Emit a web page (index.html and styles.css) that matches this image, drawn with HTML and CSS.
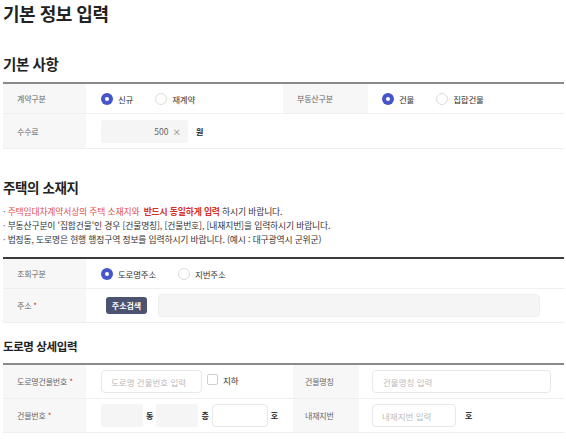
FILE: index.html
```html
<!DOCTYPE html>
<html lang="ko">
<head>
<meta charset="utf-8">
<link rel="stylesheet" href="styles.css">
</head>
<body>
<div class="page">
  <h1 class="title">기본 정보 입력</h1>

  <h2 class="sec sec-basic">기본 사항</h2>
  <div class="tbl tbl1 border-gray">
    <div class="row r29">
      <div class="lab">계약구분</div>
      <div class="val">
        <label class="radio"><span class="dot on"></span>신규</label>
        <label class="radio"><span class="dot"></span>재계약</label>
      </div>
      <div class="lab lab-r">부동산구분</div>
      <div class="val val-r">
        <label class="radio"><span class="dot on"></span>건물</label>
        <label class="radio"><span class="dot"></span>집합건물</label>
      </div>
    </div>
    <div class="row r34">
      <div class="lab">수수료</div>
      <div class="val span3">
        <div class="fee-box"><span>500</span><span class="x">×</span></div>
        <span class="unit unit-won">원</span>
      </div>
    </div>
  </div>

  <h2 class="sec sec-addr">주택의 소재지</h2>
  <ul class="notes">
    <li><span class="red">주택임대차계약서상의 주택 소재지와</span> <b class="red-b">반드시 동일하게 입력</b> 하시기 바랍니다.</li>
    <li>부동산구분이 '집합건물'인 경우 [건물명칭], [건물번호], [내재지번]을 입력하시기 바랍니다.</li>
    <li>법정동, 도로명은 현행 행정구역 정보를 입력하시기 바랍니다. (예시 : 대구광역시 군위군)</li>
  </ul>
  <div class="tbl tbl2 border-dark">
    <div class="row r29">
      <div class="lab">조회구분</div>
      <div class="val">
        <label class="radio"><span class="dot on"></span>도로명주소</label>
        <label class="radio"><span class="dot"></span>지번주소</label>
      </div>
    </div>
    <div class="row r33">
      <div class="lab">주소 <i class="req">*</i></div>
      <div class="val">
        <button class="btn-search" type="button">주소검색</button>
        <div class="addr-box"></div>
      </div>
    </div>
  </div>

  <h2 class="sec sec-detail">도로명 상세입력</h2>
  <div class="tbl tbl3 border-gray">
    <div class="row r33">
      <div class="lab">도로명건물번호 <i class="req">*</i></div>
      <div class="val">
        <input class="inp inp-road" type="text" placeholder="도로명 건물번호 입력">
        <label class="check"><span class="box"></span>지하</label>
      </div>
      <div class="lab lab-r3">건물명칭</div>
      <div class="val val-r3">
        <input class="inp inp-name" type="text" placeholder="건물명칭 입력">
      </div>
    </div>
    <div class="row r33">
      <div class="lab">건물번호 <i class="req">*</i></div>
      <div class="val">
        <div class="gbox"></div><span class="unit">동</span>
        <div class="gbox"></div><span class="unit">층</span>
        <input class="inp inp-ho" type="text"><span class="unit">호</span>
      </div>
      <div class="lab lab-r3">내재지번</div>
      <div class="val val-r3">
        <input class="inp inp-jibun" type="text" placeholder="내재지번 입력">
        <span class="unit unit-ho2">호</span>
      </div>
    </div>
  </div>
</div>
</body>
</html>
```
FILE: styles.css
```css
* { box-sizing: border-box; }
html, body { margin: 0; padding: 0; background: #fff; }
body {
  font-family: "Noto Sans CJK KR", "Noto Sans", sans-serif;
  color: #333;
}
.page { padding-left: 3px; width: 564px; }

.title {
  margin: 0;
  font-size: 18px;
  line-height: 26px;
  font-weight: 700;
  color: #222;
  letter-spacing: -0.5px;
}
.sec {
  margin: 0;
  line-height: 20px;
  font-weight: 700;
  color: #222;
  letter-spacing: -0.4px;
}
.sec-basic { font-size: 14.5px; margin-top: 28px; margin-bottom: 8px; }
.sec-addr { font-size: 13.5px; margin-top: 28px; margin-bottom: 8px; }
.sec-detail { font-size: 11.5px; margin-top: 13px; margin-bottom: 7px; }

.tbl { width: 561px; }
.border-gray { border-top: 2px solid #8a8a8a; }
.border-dark { border-top: 2px solid #3a3a3a; }

.row {
  display: grid;
  border-bottom: 1px solid #eeeeee;
}
.tbl1 .row { grid-template-columns: 83px 197px 85px 1fr; }
.tbl2 .row { grid-template-columns: 83px 1fr; }
.tbl3 .row { grid-template-columns: 83px 207px 66px 1fr; }
.r29 { height: 30px; }
.r33 { height: 34px; }
.r34 { height: 35px; }

.lab {
  background: #f7f7f7;
  font-size: 8px;
  color: #666;
  display: flex;
  align-items: center;
  padding-left: 14px;
  letter-spacing: -0.2px;
}
.lab-r { padding-left: 14px; }
.lab-r3 { padding-left: 12px; }
.val {
  display: flex;
  align-items: center;
  padding-left: 15px;
  font-size: 8.5px;
}
.val-r { padding-left: 14px; }
.val-r3 { padding-left: 13px; }
.span3 { grid-column: 2 / 5; }

.req { font-style: normal; color: #e0302a; margin-left: 2px; }

.radio {
  display: inline-flex;
  align-items: center;
  font-size: 8.5px;
  color: #333;
  margin-right: 22px;
  letter-spacing: -0.2px;
}
.dot {
  width: 12px;
  height: 12px;
  border-radius: 50%;
  border: 1px solid #dcdcdc;
  background: #fff;
  margin-right: 5px;
  position: relative;
}
.dot.on {
  border: none;
  background: #4655c8;
}
.dot.on::after {
  content: "";
  position: absolute;
  left: 4px;
  top: 4px;
  width: 4px;
  height: 4px;
  border-radius: 50%;
  background: #fff;
}

.fee-box {
  width: 87px;
  height: 23px;
  background: #f5f5f5;
  border-radius: 3px;
  display: flex;
  align-items: center;
  justify-content: flex-end;
  padding-right: 7px;
  font-size: 8.5px;
  color: #666;
}
.fee-box .x { margin-left: 4px; color: #888; }
.unit { font-size: 8px; font-weight: 700; color: #222; margin-left: 3px; margin-right: 3px; }
.unit-won { margin-left: 8px; }

.notes {
  list-style: none;
  margin: 0 0 10px;
  padding: 0;
  font-size: 8.8px;
  line-height: 14px;
  color: #333;
  letter-spacing: -0.15px;
}
.notes li::before { content: "· "; color: #666; }
.notes .red { color: #e0524b; }
.notes .red-b { color: #d3302a; font-weight: 700; margin-left: 2px; }

.btn-search {
  margin-left: 5px;
  width: 41px;
  height: 17px;
  border: none;
  border-radius: 3px;
  background: #4b5370;
  color: #fff;
  font-family: inherit;
  font-size: 8px;
  font-weight: 700;
  padding: 0;
}
.addr-box {
  margin-left: 11px;
  width: 382px;
  height: 23px;
  background: #f5f5f5;
  border: 1px solid #eeeeee;
  border-radius: 4px;
}

.inp {
  height: 23px;
  border: 1px solid #e8e8e8;
  border-radius: 4px;
  background: #fff;
  font-family: inherit;
  font-size: 8.5px;
  padding: 0 0 0 9px;
  color: #333;
  outline: none;
}
.inp::placeholder { color: #bbb; }
.inp-road { width: 101px; padding-left: 9px; }
.inp-name { width: 179px; padding-left: 10px; }
.inp-jibun { width: 84px; padding-left: 9px; }
.inp-ho { width: 56px; }
.unit-ho2 { margin-left: 9px; }

.check {
  display: inline-flex;
  align-items: center;
  margin-left: 5px;
  font-size: 8.5px;
  color: #333;
  margin-top: -4px;
}
.box {
  width: 11px;
  height: 11px;
  border: 1px solid #cfcfcf;
  border-radius: 2px;
  background: #fff;
  margin-right: 5px;
}

.gbox {
  width: 42px;
  height: 23px;
  background: #f5f5f5;
  border-radius: 3px;
}
```
